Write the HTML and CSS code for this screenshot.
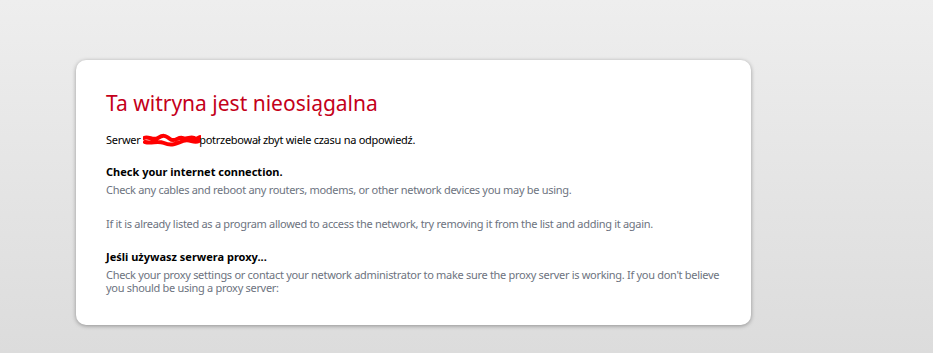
FILE: index.html
```html
<!DOCTYPE html>
<html lang="pl">
<head>
    <meta charset="UTF-8">
    <meta name="viewport" content="width=device-width, initial-scale=1.0">
    <title>Ta witryna jest nieosiągalna</title>
    <link rel="stylesheet" href="styles.css">
</head>
<body>
    <div class="page">
        <div class="error-box">
            <h1 class="title">Ta witryna jest nieosiągalna</h1>
            <p class="summary">Serwer <svg class="scribble" width="58" height="14" viewBox="0 0 58 14"><path d="M1 5 C6 3 10 8 15 5 S22 2 27 6 S35 3 40 5 S48 2 53 6 L57 4 M2 9 C9 11 14 7 21 10 S33 11 40 8 S50 11 56 8" fill="none" stroke="#ff0000" stroke-width="4" stroke-linecap="round"/></svg>potrzebował zbyt wiele czasu na odpowiedź.</p>

            <div class="section">
                <h2 class="section-title">Check your internet connection.</h2>
                <p class="hint">Check any cables and reboot any routers, modems, or other network devices you may be using.</p>
                <p class="hint spaced">If it is already listed as a program allowed to access the network, try removing it from the list and adding it again.</p>
            </div>

            <div class="section">
                <h2 class="section-title">Jeśli używasz serwera proxy...</h2>
                <p class="hint">Check your proxy settings or contact your network administrator to make sure the proxy server is working. If you don't believe you should be using a proxy server:</p>
            </div>
        </div>
    </div>
</body>
</html>
```

FILE: styles.css
```css
body {
    margin: 0;
    height: 100vh;
    background: linear-gradient(#eeeeee, #dcdcdc);
    font-family: "Noto Sans", "DejaVu Sans", sans-serif;
    font-size: 11px;
}
.page {
    padding: 60px 0 0 76px;
}
.error-box {
    width: 625px;
    height: 205px;
    padding: 30px 20px 30px 30px;
    background: #fff;
    border-radius: 10px;
    box-shadow: 0 1px 4px rgba(0, 0, 0, 0.35);
}
.title {
    margin: 0;
    font-size: 21px;
    font-weight: normal;
    color: #c4001a;
    line-height: 26px;
}
.summary {
    margin: 17px 0 0;
    color: #000;
    line-height: 14px;
    letter-spacing: -0.27px;
}
.scribble {
    vertical-align: -3px;
    margin-right: -2px;
}
.section {
    margin-top: 18px;
}
.section + .section {
    margin-top: 20px;
}
.section-title {
    margin: 0;
    font-size: 11px;
    font-weight: bold;
    color: #000;
    line-height: 14px;
}
.hint {
    margin: 4px 0 0;
    color: #6d7380;
    line-height: 13px;
    letter-spacing: -0.3px;
}
.hint.spaced {
    margin-top: 21px;
}
```
